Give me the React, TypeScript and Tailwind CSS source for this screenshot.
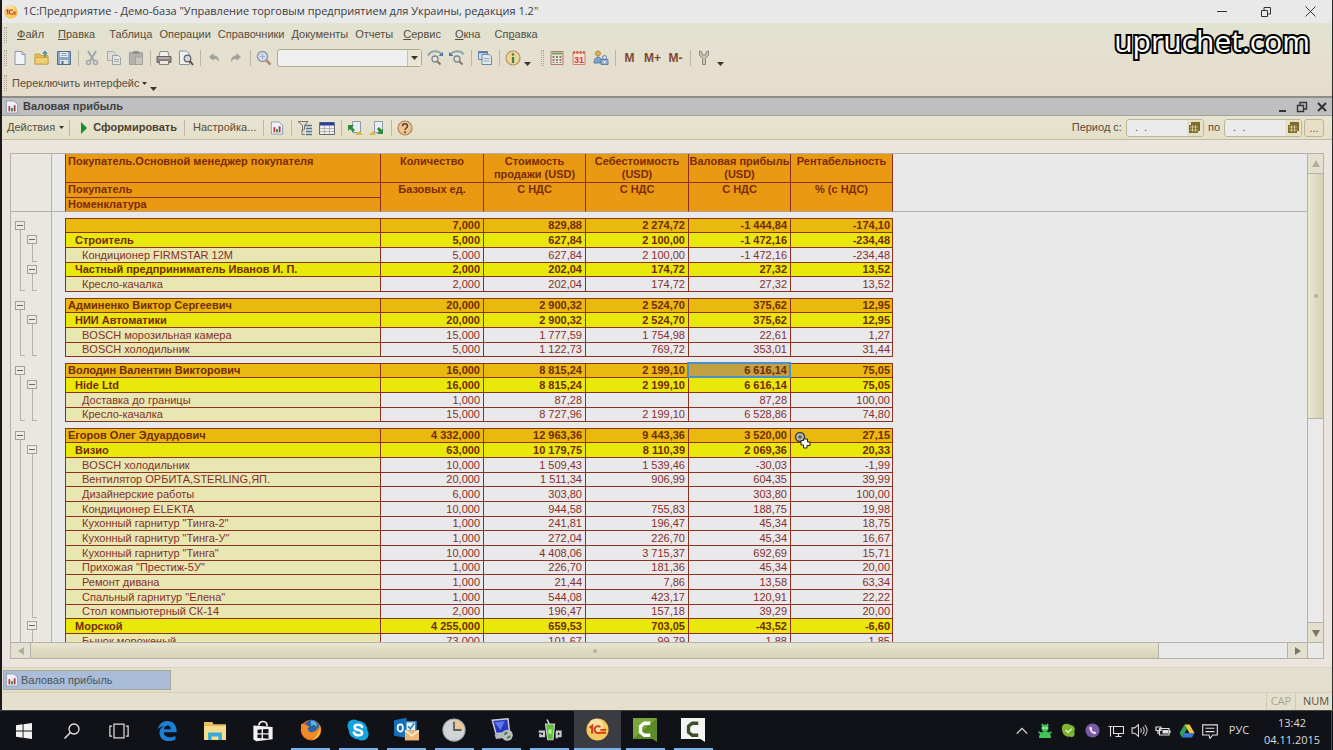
import React from "react";

type Level = "group" | "sub" | "item";
type Outline = "box" | "line" | "foot" | "none";

interface Row {
  level: Level;
  name: string;
  values: string[];
  outline: [Outline, Outline];
  selected?: number;
}

const g = (name: string, values: string[], selected?: number): Row => ({
  level: "group", name, values, outline: ["box", "none"], selected,
});
const s = (name: string, values: string[]): Row => ({ level: "sub", name, values, outline: ["line", "box"] });
const i = (name: string, values: string[], l2: Outline = "line", l1: Outline = "line"): Row => ({
  level: "item", name, values, outline: [l1, l2],
});

const groups: Row[][] = [
  [
    g("", ["7,000", "829,88", "2 274,72", "-1 444,84", "-174,10"]),
    s("Строитель", ["5,000", "627,84", "2 100,00", "-1 472,16", "-234,48"]),
    i("Кондиционер FIRMSTAR 12M", ["5,000", "627,84", "2 100,00", "-1 472,16", "-234,48"], "foot"),
    s("Частный предприниматель Иванов И. П.", ["2,000", "202,04", "174,72", "27,32", "13,52"]),
    i("Кресло-качалка", ["2,000", "202,04", "174,72", "27,32", "13,52"], "foot", "foot"),
  ],
  [
    g("Админенко Виктор Сергеевич", ["20,000", "2 900,32", "2 524,70", "375,62", "12,95"]),
    s("НИИ Автоматики", ["20,000", "2 900,32", "2 524,70", "375,62", "12,95"]),
    i("BOSCH морозильная камера", ["15,000", "1 777,59", "1 754,98", "22,61", "1,27"]),
    i("BOSCH холодильник", ["5,000", "1 122,73", "769,72", "353,01", "31,44"], "foot", "foot"),
  ],
  [
    g("Володин Валентин Викторович", ["16,000", "8 815,24", "2 199,10", "6 616,14", "75,05"], 3),
    s("Hide Ltd", ["16,000", "8 815,24", "2 199,10", "6 616,14", "75,05"]),
    i("Доставка до границы", ["1,000", "87,28", "", "87,28", "100,00"]),
    i("Кресло-качалка", ["15,000", "8 727,96", "2 199,10", "6 528,86", "74,80"], "foot", "foot"),
  ],
  [
    g("Егоров Олег Эдуардович", ["4 332,000", "12 963,36", "9 443,36", "3 520,00", "27,15"]),
    s("Визио", ["63,000", "10 179,75", "8 110,39", "2 069,36", "20,33"]),
    i("BOSCH холодильник", ["10,000", "1 509,43", "1 539,46", "-30,03", "-1,99"]),
    i("Вентилятор ОРБИТА,STERLING,ЯП.", ["20,000", "1 511,34", "906,99", "604,35", "39,99"]),
    i("Дизайнерские работы", ["6,000", "303,80", "", "303,80", "100,00"]),
    i("Кондиционер ELEKTA", ["10,000", "944,58", "755,83", "188,75", "19,98"]),
    i('Кухонный гарнитур "Тинга-2"', ["1,000", "241,81", "196,47", "45,34", "18,75"]),
    i('Кухонный гарнитур "Тинга-У"', ["1,000", "272,04", "226,70", "45,34", "16,67"]),
    i('Кухонный гарнитур "Тинга"', ["10,000", "4 408,06", "3 715,37", "692,69", "15,71"]),
    i('Прихожая "Престиж-5У"', ["1,000", "226,70", "181,36", "45,34", "20,00"]),
    i("Ремонт дивана", ["1,000", "21,44", "7,86", "13,58", "63,34"]),
    i('Спальный гарнитур "Елена"', ["1,000", "544,08", "423,17", "120,91", "22,22"]),
    i("Стол компьютерный СК-14", ["2,000", "196,47", "157,18", "39,29", "20,00"], "foot"),
    s("Морской", ["4 255,000", "659,53", "703,05", "-43,52", "-6,60"]),
    i("Бычок мороженый", ["73,000", "101,67", "99,79", "1,88", "1,85"]),
  ],
];

const levelName: Record<Level, string> = {
  group: "bg-[#e9b90f] font-bold pl-[2px]",
  sub: "bg-[#e9e80b] font-bold pl-[9px]",
  item: "bg-[#e8e7b2] pl-[16px]",
};
const levelValue: Record<Level, string> = {
  group: "bg-[#e9b90f] font-bold",
  sub: "bg-[#e9e80b] font-bold",
  item: "bg-[#e9e8ea]",
};
const levelText: Record<Level, string> = {
  group: "text-[#742a06]",
  sub: "text-[#742a06]",
  item: "text-[#85302a]",
};

function Mark({ kind }: { kind: Outline }) {
  if (kind === "box")
    return (
      <button type="button" aria-label="Свернуть" className="flex h-full w-3 flex-col items-center">
        <span className="mt-[3px] flex h-[9px] w-[10px] shrink-0 items-center justify-center border border-[#a3a09a] bg-[#edeae6]">
          <span className="h-px w-[6px] bg-[#6b6862]" />
        </span>
        <span className="w-px flex-1 bg-[#b5b2ac]" />
      </button>
    );
  if (kind === "none") return <span className="w-3" />;
  return (
    <span className="flex h-full w-3 pl-[6px]">
      <span className={kind === "foot" ? "h-full w-[5px] border-b border-l border-[#b5b2ac]" : "h-full border-l border-[#b5b2ac]"} />
    </span>
  );
}

const B = "border-[#8c3020]";

function ReportTable() {
  const head = `border-l ${B} text-center`;
  return (
    <table className="w-full table-fixed border-separate border-spacing-0 text-[11px] leading-[13px]">
      <colgroup>
        <col className="w-[41px]" />
        <col className="w-[13px]" />
        <col className="w-[315px]" />
        <col className="w-[103px]" />
        <col className="w-[102px]" />
        <col className="w-[103px]" />
        <col className="w-[102px]" />
        <col className="w-[103px]" />
        <col />
      </colgroup>
      <thead className="text-[#7a2a08]">
        <tr className="h-[28px] align-top">
          <td rowSpan={3} className="border-r border-b border-[#b3b1ac] bg-[#eae6e0]" />
          <td rowSpan={3} className="border-b border-[#b3b1ac]" />
          <th className={`border-l ${B} bg-[#ea9a12] p-0 pt-px pl-[2px] text-left`}>Покупатель.Основной менеджер покупателя</th>
          <th className={`${head} bg-[#ea9a12] p-0 pt-px`}>Количество</th>
          <th className={`${head} bg-[#ea9a12] p-0 pt-px`}>Стоимость<br />продажи (USD)</th>
          <th className={`${head} bg-[#ea9a12] p-0 pt-px`}>Себестоимость<br />(USD)</th>
          <th className={`${head} bg-[#ea9a12] p-0 pt-px whitespace-nowrap`}>Валовая прибыль<br />(USD)</th>
          <th className={`border-r ${head} bg-[#ea9a12] p-0 pt-px`}>Рентабельность</th>
          <td rowSpan={3} className="border-b border-[#b3b1ac]" />
        </tr>
        <tr className="h-[15px] align-top">
          <th className={`border-t border-l ${B} bg-[#ea9a12] p-0 pl-[2px] text-left`}>Покупатель</th>
          {["Базовых ед.", "С НДС", "С НДС", "С НДС"].map((t, n) => (
            <th key={n} rowSpan={2} className={`border-t ${head} border-b border-b-[#b3a08c] bg-[#ea9a12] p-0`}>{t}</th>
          ))}
          <th rowSpan={2} className={`border-t border-r ${head} border-b border-b-[#b3a08c] bg-[#ea9a12] p-0`}>% (с НДС)</th>
        </tr>
        <tr className="h-[15px] align-top">
          <th className={`border-t border-l ${B} border-b border-b-[#b3a08c] bg-[#ea9a12] p-0 pl-[2px] text-left`}>Номенклатура</th>
        </tr>
      </thead>
      <tbody>
        <tr className="h-[6px]">
          <td className="border-r border-[#b3b1ac] bg-[#eae6e0] p-0" />
          <td colSpan={8} className="p-0" />
        </tr>
      </tbody>
      {groups.map((rows, n) => (
        <tbody key={n}>
          {rows.map((r, k) => (
            <tr key={k} className={`h-[15px] nth-[3n+1]:h-[14px] ${levelText[r.level]}`}>
              <td className="h-[inherit] border-r border-[#b3b1ac] bg-[#eae6e0] p-0">
                <div className="flex h-full pl-[3px]">
                  <Mark kind={r.outline[0]} />
                  <Mark kind={r.outline[1]} />
                </div>
              </td>
              <td className="p-0" />
              <td className={`overflow-hidden border-t border-l ${B} p-0 whitespace-nowrap ${levelName[r.level]}`}>{r.name}</td>
              {r.values.map((v, c) => (
                <td
                  key={c}
                  className={`border-t border-l ${B} p-0 pr-[3px] text-right whitespace-nowrap nth-8:border-r nth-8:pr-[2px] ${
                    r.selected === c ? "bg-[#c3a142] font-bold outline-2 -outline-offset-1 outline-[#4a90cb]" : levelValue[r.level]
                  }`}
                >
                  {v}
                </td>
              ))}
            </tr>
          ))}
          <tr className="h-[7px]">
            <td className="border-r border-[#b3b1ac] bg-[#eae6e0] p-0" />
            <td className="p-0" />
            <td colSpan={6} className={`border-t ${B} p-0`} />
          </tr>
        </tbody>
      ))}
    </table>
  );
}

function Svg({ children, size = 16 }: { children: React.ReactNode; size?: number }) {
  return (
    <svg width={size} height={size} viewBox="0 0 16 16" fill="none" aria-hidden="true">
      {children}
    </svg>
  );
}

const DocIcon = () => (
  <Svg>
    <path d="M3 1.5h7l3 3v10H3z" fill="#f1f3f6" stroke="#8b98ad" />
    <path d="M10 1.5v3h3" stroke="#8b98ad" />
  </Svg>
);
const ReportIcon = () => (
  <Svg size={14}>
    <path d="M1.5 1h9l4 4v10h-13z" fill="#eef0f5" stroke="#8492ad" />
    <path d="M5 13V7" stroke="#c0392b" strokeWidth="2" />
    <path d="M8 13V9" stroke="#3f7f4a" strokeWidth="2" />
    <path d="M11 13V6" stroke="#9c3a4d" strokeWidth="2" />
  </Svg>
);
const OpenIcon = () => (
  <Svg>
    <path d="M1 4h5l1 1.500h7V14H1z" fill="#e8bd52" stroke="#c09a3e" strokeWidth=".8" />
    <path d="M1 14V7.500h13V14z" fill="#f0cf72" stroke="#c09a3e" strokeWidth=".8" />
    <path d="M11 7V2M9 4l2-2.500L13 4" stroke="#4d87a5" strokeWidth="1.400" />
  </Svg>
);
const SaveIcon = () => (
  <Svg>
    <path d="M1.500 1.500h13v13h-13z" fill="#8ea5c4" stroke="#54708f" />
    <path d="M4 2h8v5H4z" fill="#e8eef2" />
    <path d="M5 3.500h6M5 5.500h6" stroke="#7b94a5" strokeWidth=".8" />
    <path d="M4 10h8v4H4z" fill="#dce4ea" />
    <path d="M5.500 11h2v3h-2z" fill="#54708f" />
  </Svg>
);
const CutIcon = () => (
  <Svg>
    <path d="M4 1l6 10M12 1L6 11" stroke="#9fa8ad" strokeWidth="2" />
    <circle cx="4.500" cy="12.500" r="2" stroke="#9fa8ad" strokeWidth="1.500" />
    <circle cx="11.500" cy="12.500" r="2" stroke="#9fa8ad" strokeWidth="1.500" />
  </Svg>
);
const CopyIcon = () => (
  <Svg>
    <path d="M1.500 1.500h6l2 2v7h-8z" fill="#dcdcd8" stroke="#a5aaae" />
    <path d="M6.500 5.500h6l2 2v7h-8z" fill="#e2e2de" stroke="#9aa1a7" />
    <path d="M8 9.500h5M8 11.500h5" stroke="#a5aaae" />
  </Svg>
);
const PasteIcon = () => (
  <Svg>
    <path d="M1.500 2.500h13v12h-13z" fill="#b4b2aa" stroke="#a19f98" />
    <path d="M5 1h6v3H5z" fill="#95938d" />
    <path d="M7.500 7h7v7.500h-7z" fill="#c4c3bc" stroke="#a3a29b" />
  </Svg>
);
const PrintIcon = () => (
  <Svg>
    <path d="M4 1.500h8l1 5H3z" fill="#f0f0f0" stroke="#777" strokeWidth=".8" />
    <path d="M1 6.500h14v6H1z" fill="#8d8a8c" stroke="#66635f" />
    <path d="M2.500 8h11" stroke="#d5d0c4" />
    <path d="M3.500 10.500h9v4h-9z" fill="#ece9e0" stroke="#6a6764" strokeWidth=".8" />
    <path d="M12 9h2" stroke="#c88a49" />
  </Svg>
);
const PreviewIcon = () => (
  <Svg>
    <path d="M1.500 1h7l3 3v10.500h-10z" fill="#eff0f2" stroke="#8793a3" />
    <circle cx="9.500" cy="8.500" r="3.300" fill="#cfd9df" stroke="#5d6268" strokeWidth="1.200" />
    <path d="M12 11l3 4" stroke="#6a4d3e" strokeWidth="2" />
  </Svg>
);
const UndoIcon = () => (
  <Svg>
    <path d="M3 7l4.500-4v2.500c4 0 5.500 2.500 5.500 6.500-1.500-2.500-3-3-5.500-3V11z" fill="#a3a39d" />
  </Svg>
);
const RedoIcon = () => (
  <Svg>
    <path d="M13 7L8.500 3v2.500C4.500 5.500 3 8 3 12c1.500-2.500 3-3 5.500-3v2z" fill="#a3a39d" />
  </Svg>
);
const SearchIcon = () => (
  <Svg>
    <path d="M10 10l4.500 4.500" stroke="#b08d62" strokeWidth="2.500" />
    <circle cx="6.500" cy="6.500" r="5" fill="#d6dde8" stroke="#9199ae" strokeWidth="1.500" />
    <path d="M4 6.500h5M6.500 4v5" stroke="#9db0cb" />
  </Svg>
);
const FindIcon = ({ back = false }: { back?: boolean }) => (
  <Svg>
    <path d="M1 5.500C4 0 12 0 14.500 4.500" stroke="#8ba2ad" strokeWidth="1.800" />
    <path d={back ? "M0 2v4h4.500z" : "M16 2v4h-4.500z"} fill="#4d7a9b" />
    <circle cx="8" cy="9" r="3" fill="#e1e4e2" stroke="#7e878c" strokeWidth="1.300" />
    <path d="M10.500 11.500l3 3" stroke="#8c6f5a" strokeWidth="1.800" />
  </Svg>
);
const WindowsIcon = () => (
  <Svg>
    <path d="M1.500 1.500h9v8h-9z" fill="#d5dde8" stroke="#6a87aa" />
    <path d="M1.500 2.500h9" stroke="#5478a5" strokeWidth="1.500" />
    <path d="M5 4.500h7l2.500 2.500v7.500H5z" fill="#e4e9ee" stroke="#6a87aa" />
    <path d="M6.500 8.500h6M6.500 11h6" stroke="#8ea6c2" />
  </Svg>
);
const InfoIcon = () => (
  <Svg>
    <circle cx="8" cy="8" r="7" fill="#ecd49c" stroke="#b3945c" strokeWidth="1.200" />
    <circle cx="8" cy="4.500" r="1.300" fill="#3c8242" />
    <path d="M8 7v6" stroke="#3c8242" strokeWidth="2.200" />
  </Svg>
);
const CalcIcon = () => (
  <Svg>
    <path d="M2 1.500h12v13H2z" fill="#f3e2cd" stroke="#b07a66" />
    <path d="M3 3.500h10" stroke="#67a275" strokeWidth="2" />
    <path d="M4.500 6v7M8 6v7M11.500 6v7" stroke="#7c8379" strokeWidth="2" strokeDasharray="2 1" />
  </Svg>
);
const CalendarIcon = () => (
  <Svg>
    <path d="M2 2.500h12v12H2z" fill="#f7e3d5" stroke="#c98571" />
    <path d="M2 2.500h12" stroke="#d66a53" strokeWidth="3" strokeDasharray="2 1.300" />
    <text x="8" y="13" textAnchor="middle" fontSize="9" fontWeight="bold" fill="#d8402a" fontFamily="Liberation Sans, sans-serif">31</text>
  </Svg>
);
const UsersIcon = () => (
  <Svg>
    <circle cx="5" cy="3.500" r="2.500" fill="#e4b04f" stroke="#a98038" strokeWidth=".8" />
    <path d="M1 13c0-8 8-8 8 0z" fill="#7fa3cb" stroke="#4b7097" strokeWidth=".8" />
    <circle cx="11.500" cy="7.500" r="2" fill="#d9dfe7" stroke="#4b7097" strokeWidth=".9" />
    <path d="M8 14.500h7v-5H8z" fill="#9cb7d7" stroke="#4b7097" strokeWidth=".8" />
    <path d="M11.500 11v2" stroke="#fff" strokeWidth="1.200" />
  </Svg>
);
const WrenchIcon = () => (
  <Svg>
    <path d="M3.500 1v4.500L6.500 8v6.500h3V8l3-2.500V1L10 2v3H6V2z" fill="#cbc7bd" stroke="#8b8880" />
  </Svg>
);
const FilterIcon = () => (
  <Svg>
    <path d="M1 1.500h10L7.500 5.500v4l-2 1v-5z" fill="#e3ddcd" stroke="#77736c" />
    <path d="M8 5.500h7M9 8.500h6M9 11.500h6M9 14.500h6" stroke="#4b78a0" strokeWidth="1.500" />
    <path d="M5 10v4.500h3" stroke="#777" />
  </Svg>
);
const GridIcon = () => (
  <Svg>
    <path d="M.5 2.500h15v12H.5z" fill="#f0eee9" stroke="#656a78" />
    <path d="M1 4h14" stroke="#27409a" strokeWidth="3" />
    <path d="M1 8.500h14M1 11.500h14M5.500 6v8M10.500 6v8" stroke="#a5a5a5" strokeWidth=".8" />
  </Svg>
);
const SheetArrowIcon = ({ down = false }: { down?: boolean }) => (
  <Svg>
    <path d="M5.500 1.500h8v11h-8z" fill="#e9edf0" stroke="#8d9aa9" />
    <path d={down ? "M14 14H8l2-2-2-3 2-2 3 3 1-2z" : "M1 5h6L5 7l3 3-2 2-3-3-2 2z"} fill="#2f8a3c" />
    <path d={down ? "M0 15l4-4 3 4z" : "M8 15l4-4 4 4z"} fill="#dfb83d" />
  </Svg>
);
const HelpIcon = () => (
  <Svg>
    <circle cx="8" cy="8" r="7" fill="#efc48f" stroke="#ad845b" strokeWidth="1.200" />
    <path d="M5.500 6.200C5.500 3 10.500 3 10.500 6.200 10.500 8 8 8 8 10" stroke="#5b4236" strokeWidth="1.500" />
    <circle cx="8" cy="12.200" r="1" fill="#5b4236" />
  </Svg>
);
const OneC = ({ size = 16 }: { size?: number }) => (
  <Svg size={size}>
    <circle cx="8" cy="8" r="7.700" fill="#f4c95c" />
    <circle cx="7" cy="5.500" r="5" fill="#f8e0a0" />
    <path d="M2.500 6.800L4.300 5.500v5.200" stroke="#d23a1c" strokeWidth="1.500" />
    <path d="M10 6.300C8.500 5 6 5.800 6 8s2 2.700 3.500 2.300H14M10 8.300H14" stroke="#d23a1c" strokeWidth="1.300" />
  </Svg>
);
const Tri = ({ className = "" }: { className?: string }) => (
  <svg width="7" height="4" viewBox="0 0 7 4" className={className} aria-hidden="true">
    <path d="M0 0h7L3.500 4z" fill="#3b342a" />
  </svg>
);

const Sep = () => <span className="flex w-[6px] justify-center"><span className="h-4 w-px bg-[#bdb6a4]" /></span>;
const Grip = () => <span className="h-4 w-[3px] border-x border-dotted border-[#aaa494]" />;
const Tool = ({ label, children }: { label: string; children: React.ReactNode }) => (
  <button type="button" aria-label={label} className="flex h-5 w-[22px] shrink-0 items-center justify-center">
    {children}
  </button>
);

function MainToolbar() {
  return (
    <div className="flex h-6 items-center pl-[2px]">
      <Grip />
      <span className="w-[2px]" />
      <Tool label="Новый"><DocIcon /></Tool>
      <Tool label="Открыть"><OpenIcon /></Tool>
      <Tool label="Сохранить"><SaveIcon /></Tool>
      <Sep />
      <Tool label="Вырезать"><CutIcon /></Tool>
      <Tool label="Копировать"><CopyIcon /></Tool>
      <Tool label="Вставить"><PasteIcon /></Tool>
      <Sep />
      <Tool label="Печать"><PrintIcon /></Tool>
      <Tool label="Просмотр"><PreviewIcon /></Tool>
      <Sep />
      <Tool label="Отменить"><UndoIcon /></Tool>
      <Tool label="Повторить"><RedoIcon /></Tool>
      <Sep />
      <Tool label="Найти"><SearchIcon /></Tool>
      <span className="mx-[2px] flex h-[18px] w-[145px] rounded-[3px] border border-[#b3aa8e] bg-[#f0eff0]">
        <input aria-label="Строка поиска" className="min-w-0 flex-1 bg-transparent px-1 outline-none" />
        <button type="button" aria-label="История поиска" className="flex w-[14px] items-center justify-center border-l border-[#c9c2a8] bg-[#ebe6d3]">
          <Tri />
        </button>
      </span>
      <Tool label="Найти следующий"><FindIcon /></Tool>
      <Tool label="Найти предыдущий"><FindIcon back /></Tool>
      <Sep />
      <Tool label="Окна"><WindowsIcon /></Tool>
      <Sep />
      <Tool label="Справка"><InfoIcon /></Tool>
      <Tri className="mt-[11px]" />
      <span className="w-[10px]" />
      <Grip />
      <span className="w-[2px]" />
      <Tool label="Калькулятор"><CalcIcon /></Tool>
      <Tool label="Календарь"><CalendarIcon /></Tool>
      <Tool label="Пользователи"><UsersIcon /></Tool>
      <Sep />
      {["M", "M+", "M-"].map((m) => (
        <button key={m} type="button" className="w-[23px] text-center text-[12px] font-bold text-[#7d4a35]">{m}</button>
      ))}
      <Sep />
      <Tool label="Настройки"><WrenchIcon /></Tool>
      <Tri className="mt-[11px] ml-[2px]" />
    </div>
  );
}

const menu: [string, string, string][] = [
  ["", "Ф", "айл"],
  ["", "П", "равка"],
  ["Таблица", "", ""],
  ["Операции", "", ""],
  ["Справочники", "", ""],
  ["Документы", "", ""],
  ["Отчеты", "", ""],
  ["", "С", "ервис"],
  ["", "О", "кна"],
  ["Сп", "р", "авка"],
];

function RestoreGlyph({ bold = false }: { bold?: boolean }) {
  return (
    <svg width="12" height="12" viewBox="0 0 12 12" fill="none" stroke="#333" strokeWidth={bold ? 1.4 : 1} aria-hidden="true">
      <path d="M1.500 4.500h6v6h-6zM4 4V1.500h6.500V8H8" />
    </svg>
  );
}

function DateField({ label }: { label: string }) {
  return (
    <>
      <label htmlFor={label}>{label}</label>
      <span className="flex h-[18px] w-[78px] rounded-[3px] border border-[#bdb597] bg-[#ecebeb]">
        <input id={label} defaultValue=".  ." className="min-w-0 flex-1 bg-transparent pl-2 text-[11px] outline-none" />
        <button type="button" aria-label="Выбрать дату" className="flex w-4 items-center justify-center bg-[#e6e0c6]">
          <svg width="11" height="11" viewBox="0 0 11 11" aria-hidden="true">
            <path d="M2 0h9v9H9v2H0V3h2z" fill="#7d6c2c" />
            <path d="M1 5h8M1 8h8M3.500 3v7M6.500 3v7" stroke="#d8cf9e" strokeWidth=".8" />
          </svg>
        </button>
      </span>
    </>
  );
}

const appIcons: { label: string; state: "idle" | "open" | "active"; icon: React.ReactNode }[] = [
  { label: "Пуск", state: "idle", icon: <Svg><path d="M0 2.300L6.600 1.300v6.200H0zM7.500 1.200L16 0v7.500H7.500zM0 8.500h6.600v6.200L0 13.700zM7.500 8.500H16V16l-8.500-1.200z" fill="#f2f2f2" /></Svg> },
  { label: "Поиск", state: "idle", icon: <Svg><circle cx="10" cy="6" r="5" stroke="#e6e6e6" strokeWidth="1.300" /><path d="M6.500 9.500L.5 15.500" stroke="#e6e6e6" strokeWidth="1.400" /></Svg> },
  { label: "Представление задач", state: "idle", icon: <Svg size={20}><path d="M4 2.500h8v11H4zM2.500 4H.7v8h1.800M13.500 4h1.800v8h-1.800" stroke="#dcdcdc" /></Svg> },
  { label: "Edge", state: "idle", icon: <Svg size={20}><path d="M.5 7C1.500 2 5 0 8.500 0 13 0 16 3.500 15.700 9H5.500c0 4.500 5.500 5 9.200 2.700v3C9 17.500 2 15.500 2 9.500 2 6.500 4 4.500 6 3.800 4 4 1.800 5 .5 7zM5.500 6.500H11C11 2.500 6 2.800 5.500 6.500z" fill="#1c7fd6" /></Svg> },
  { label: "Проводник", state: "idle", icon: <Svg size={22}><path d="M0 1.500h6l1 1.500h9v11.500H0z" fill="#e6bd5e" /><path d="M0 4.500h16v10H0z" fill="#f6dc8e" /><path d="M3 14.500V9h10v5.500h-2.500V12h-5v2.500z" fill="#36a9d8" /></Svg> },
  { label: "Магазин", state: "idle", icon: <Svg size={22}><path d="M1 4l14 1v9L3 15.500 1 14z" fill="#f2f2f2" /><path d="M5 4C5 0 11 0 11 4.500" stroke="#f2f2f2" strokeWidth="1.200" /><path d="M4 7l3-.2v2.900H4zM8 6.800l4-.3v3.200H8zM4 10.500h3v2.700l-3-.2zM8 10.500h4v3.200l-4-.4z" fill="#111318" /></Svg> },
  { label: "Firefox", state: "open", icon: <Svg size={22}><circle cx="8" cy="8" r="7.500" fill="#e8681b" /><circle cx="8.500" cy="6" r="5.400" fill="#2863a8" /><path d="M8 1c4 0 5 3 4 5-1-2-2-2-4-1z" fill="#57b4dc" /><path d="M.8 4C3 2 4 5 7 5.500 4.500 7 6 10 9 9.500c2 0 3.500-1.500 4.500-4 1 4-1 8.500-5.500 9C3 15 0 10 .8 4z" fill="#f08a24" /><path d="M14.500 4.500c1.500 5-1 10.500-6.500 11 3.500-2 6-5 6.500-11z" fill="#f7c63c" /></Svg> },
  { label: "Skype", state: "open", icon: <Svg size={22}><circle cx="5" cy="5" r="4.700" fill="#15a3dd" /><circle cx="11" cy="11" r="4.700" fill="#15a3dd" /><circle cx="8" cy="8" r="6.800" fill="#15a3dd" /><path d="M11 5.800C10 3.500 5.500 3.800 5.500 6c0 2.800 5.500 1.200 5.500 4 0 2.400-5 2.600-6-.2" stroke="#fff" strokeWidth="1.900" strokeLinecap="round" /></Svg> },
  { label: "Outlook", state: "open", icon: <Svg size={25}><path d="M7 3h7v6H7z" fill="#e7eff7" stroke="#2b83cb" /><path d="M9 6l1.500 1.500L13 4" stroke="#2b83cb" /><path d="M0 2l8-1.500v13L0 12z" fill="#1570bb" /><ellipse cx="4" cy="7" rx="1.700" ry="2.300" stroke="#fff" strokeWidth="1.100" /><path d="M7 8.500h9V15H7z" fill="#eeb878" /><path d="M7 8.500l4.500 3.500L16 8.500" stroke="#fff0d8" /></Svg> },
  { label: "Часы", state: "open", icon: <Svg size={24}><circle cx="8" cy="8" r="7.400" fill="#d1d3d4" stroke="#a6a8aa" strokeWidth=".7" /><path d="M8 8V1.500A6.500 6.500 0 0 1 14.500 8z" fill="#e9c98c" /><path d="M8 2.500V8h5" stroke="#59606c" strokeWidth="1.200" /></Svg> },
  { label: "Удалённый рабочий стол", state: "open", icon: <Svg size={24}><path d="M1.500 1.500L12 .5l1 9-9 1z" fill="#2739bd" stroke="#c8ccd8" /><path d="M3 3l7-1-3 6z" fill="#6276e5" /><path d="M3 11l8-1 1 3-8 1z" fill="#b4b8be" /><circle cx="11.500" cy="11.500" r="3.700" fill="#b9beba" /><path d="M9.500 11l2-1.500M11.500 13.500l2-1.500" stroke="#397647" strokeWidth="1.200" /></Svg> },
  { label: "Утилита", state: "open", icon: <Svg size={24}><path d="M5 4h6l-1 10.500H6.500z" fill="#5fbf3a" stroke="#c9cfd0" strokeWidth=".8" /><path d="M6 1l1.500 3" stroke="#d9d9d9" /><path d="M.5 9h3.500v3H1.500v-1.500M12 9h3v3h-2.500V9v4.500" stroke="#c9cccf" strokeWidth="1.500" /><path d="M7 9h2" stroke="#b4f08c" strokeWidth="3" /></Svg> },
  { label: "1С:Предприятие", state: "active", icon: <OneC size={23} /> },
  { label: "Camtasia Studio", state: "open", icon: <Svg size={24}><path d="M0 0h16v16l-3-2H0z" fill="#5b8a27" /><path d="M0 0h16L0 14z" fill="#78a63b" /><path d="M11.500 3.500H7.500L5 5.500v4L7.500 11.500h4" stroke="#fff" strokeWidth="2.200" /></Svg> },
  { label: "Camtasia Recorder", state: "open", icon: <Svg size={24}><path d="M0 0h16v16l-3-2H0z" fill="#f3f5f1" /><path d="M11.500 3.500H7.500L5 5.500v4L7.500 11.500h4" stroke="#3c4f2a" strokeWidth="2.200" /></Svg> },
];

const tray: { label: string; icon: React.ReactNode }[] = [
  { label: "Показать скрытые значки", icon: <Svg size={14}><path d="M2 11l6-6 6 6" stroke="#dedede" strokeWidth="1.500" /></Svg> },
  { label: "Агент", icon: <Svg><circle cx="8" cy="5" r="3.500" fill="#3fc65b" /><path d="M2 15c0-9 12-9 12 0z" fill="#3fc65b" /><path d="M5 1l1.500 3M11 1L9.500 4M1.500 9L5 11M14.500 9L11 11" stroke="#3fc65b" strokeWidth="1.800" /><circle cx="6.500" cy="5" r="1" fill="#d5f5da" /><circle cx="9.500" cy="5" r="1" fill="#d5f5da" /></Svg> },
  { label: "Skype для бизнеса", icon: <Svg size={15}><path d="M1 5C1 0 7 0 10 2c4 0 6 4 4 7 2 5-2 7-5 5.500C4 15 1 11 1 5z" fill="#7fb52e" /><path d="M5 7.500l2.500 2.500L11.500 6" stroke="#e6f3cd" strokeWidth="1.500" /></Svg> },
  { label: "Viber", icon: <Svg size={15}><circle cx="8" cy="8" r="7.500" fill="#7a5aa6" /><path d="M4.500 4.500c0 4 3 7 6.500 7.500l1-2-2-1.200-1 .8L7 7.300l.8-1-1-2.300z" fill="#eee7f6" /></Svg> },
  { label: "Сеть", icon: <Svg><path d="M5.500 3.500h10v7h-10zM10.500 10.500v3M7.500 13.500h6M.5 3.500h4M2.500 3.500v10" stroke="#e0e0e0" strokeWidth="1.100" /></Svg> },
  { label: "Громкость", icon: <Svg size={17}><path d="M1 5.500h2.500L7 2.500v11l-3.500-3H1z" stroke="#e0e0e0" /><path d="M9 6c1 1.500 1 2.500 0 4M11 4.500c2 2.500 2 4.500 0 7M13 3c3 3.500 3 6.500 0 10" stroke="#c6c6c6" /></Svg> },
  { label: "Батарея", icon: <Svg><path d="M4.500 5.500h9.500v6.500H4.500zM15 7.500v2.500" stroke="#e0e0e0" strokeWidth="1.200" /><path d="M7.500 7H13v3.500H7.500z" fill="#e0e0e0" /><path d="M1 4h5v3.500H1zM3 7v4" stroke="#e0e0e0" strokeWidth="1.200" /></Svg> },
  { label: "Google Диск", icon: <Svg><path d="M5.500 1.500h5l5 8.500h-5z" fill="#f3c73a" /><path d="M5.500 1.500L8 6 3 14.500.5 10z" fill="#2da05a" /><path d="M5.500 10h10L13 14.500H3z" fill="#3c77d8" /></Svg> },
  { label: "Уведомления", icon: <Svg size={18}><path d="M1.500 2.500h13v9h-4l-2.500 3-1-3H1.500z" stroke="#e0e0e0" /><path d="M4 5.500h8M4 8.500h8" stroke="#e0e0e0" /></Svg> },
];

function Taskbar() {
  return (
    <footer className="flex h-10 shrink-0 items-stretch justify-between border-t border-[#45453f] bg-[#101217] text-[#dcdcdc]">
      <nav className="grid w-[717px] grid-cols-[repeat(15,minmax(0,1fr))]">
        {appIcons.map((a) => (
          <button
            key={a.label}
            type="button"
            aria-label={a.label}
            className={`flex flex-col items-center ${a.state === "active" ? "bg-[#3b3c42]" : ""}`}
          >
            <span className="flex flex-1 items-center">{a.icon}</span>
            {a.state !== "idle" && <span className={`h-[2px] bg-[#7ab2ec] ${a.state === "active" ? "w-full" : "w-[39px]"}`} />}
          </button>
        ))}
      </nav>
      <div className="flex items-center font-['Open_Sans','Noto_Sans',sans-serif] text-[11px]">
        <div className="grid w-[212px] grid-cols-[repeat(9,minmax(0,1fr))]">
          {tray.map((t) => (
            <button key={t.label} type="button" aria-label={t.label} className="flex items-center justify-center">{t.icon}</button>
          ))}
        </div>
        <button type="button" className="w-[34px] text-center">РУС</button>
        <div className="w-[71px] pl-px text-center leading-[17px]">
          <div>13:42</div>
          <div>04.11.2015</div>
        </div>
        <span className="ml-1 h-full w-[2px] border-l border-[#4a4c50]" />
      </div>
    </footer>
  );
}

const Arrow = ({ d, color }: { d: string; color: string }) => (
  <svg width="8" height="8" viewBox="0 0 8 8" aria-hidden="true"><path d={d} fill={color} /></svg>
);

export default function App() {
  return (
    <div className="relative flex h-screen w-full flex-col overflow-hidden bg-[#101217] font-['Liberation_Sans',Arial,sans-serif] text-[11px] text-[#574d3b]">
      <div className="flex min-h-0 flex-1 flex-col border-r border-l-2 border-r-[#2b2b2b] border-l-[#1c1a1c] bg-[#ebe5de]">
        <header className="flex h-[23px] shrink-0 items-center bg-[#eae9ea] pl-[2px] text-[#3c3c3c]">
          <OneC size={14} />
          <h1 className="flex-1 pl-[5px] font-['Open_Sans','Noto_Sans',sans-serif] text-[11px]">
            1С:Предприятие - Демо-база "Управление торговым предприятием для Украины, редакция 1.2"
          </h1>
          <button type="button" aria-label="Свернуть окно" className="flex w-11 justify-center"><span className="h-px w-[10px] bg-[#333]" /></button>
          <button type="button" aria-label="Восстановить окно" className="flex w-11 justify-center"><RestoreGlyph /></button>
          <button type="button" aria-label="Закрыть окно" className="flex w-11 justify-center">
            <svg width="11" height="11" viewBox="0 0 11 11" stroke="#333" aria-hidden="true"><path d="M.5.5l10 10M10.500.5l-10 10" /></svg>
          </button>
        </header>

        <div className="shrink-0 bg-linear-to-b from-[#e2e3d2] via-[#e5dfcf] to-[#e6dccb]">
          <nav className="flex h-[23px] items-center pl-[2px]">
            <Grip />
            <div className="flex pl-[10px]">
              {menu.map(([a, b, c]) => (
                <a key={a + b + c} href="#" className={b ? "mr-[14px]" : "mr-[7px] nth-7:mr-[10px]"}>
                  {a}{b && <u>{b}</u>}{c}
                </a>
              ))}
            </div>
          </nav>
          <MainToolbar />
          <div className="flex h-[26px] items-center pl-[2px]">
            <Grip />
            <button type="button" className="flex items-center gap-[2px] pl-[5px]">
              Переключить интерфейс <svg width="5" height="3" viewBox="0 0 5 3" aria-hidden="true"><path d="M0 0h5L2.500 3z" fill="#3b342a" /></svg>
            </button>
            <Tri className="mt-3 ml-[3px]" />
          </div>
        </div>

        <div className="flex h-5 shrink-0 items-center border-t-2 border-b border-t-[#8f8d87] border-b-[#a09f99] bg-[#bfbfbf] pl-[3px]">
          <ReportIcon />
          <h2 className="flex-1 pl-1 text-[11px] font-bold text-[#404040]">Валовая прибыль</h2>
          <div className="flex items-center">
            <button type="button" aria-label="Свернуть отчёт" className="flex w-5 justify-center"><span className="mt-2 h-[2px] w-[7px] bg-[#333]" /></button>
            <button type="button" aria-label="Восстановить отчёт" className="flex w-5 justify-center"><RestoreGlyph bold /></button>
            <button type="button" aria-label="Закрыть отчёт" className="flex w-5 justify-center">
              <svg width="10" height="10" viewBox="0 0 10 10" stroke="#333" strokeWidth="2" aria-hidden="true"><path d="M1 1l8 8M9 1L1 9" /></svg>
            </button>
          </div>
        </div>

        <div className="flex h-6 shrink-0 items-center justify-between border-b border-[#c2bba6] bg-linear-to-b from-[#e7e4d2] to-[#e4dfc8]">
          <div className="flex items-center">
            <button type="button" className="flex items-center gap-1 pl-[5px]">
              Действия <svg width="5" height="3" viewBox="0 0 5 3" aria-hidden="true"><path d="M0 0h5L2.500 3z" fill="#3b342a" /></svg>
            </button>
            <span className="w-[2px]" />
            <Sep />
            <button type="button" className="flex items-center gap-[6px] pl-[9px] text-[11px] font-bold text-[#4a4130]">
              <svg width="6" height="12" viewBox="0 0 6 12" aria-hidden="true"><path d="M0 0l6 6-6 6z" fill="#1d8a26" /></svg>
              Сформировать
            </button>
            <span className="w-1" />
            <Sep />
            <button type="button" className="pr-1 pl-[6px]">Настройка...</button>
            <Sep />
            <Tool label="Отчёт"><ReportIcon /></Tool>
            <Sep />
            <Tool label="Отбор"><FilterIcon /></Tool>
            <Tool label="Таблица"><GridIcon /></Tool>
            <Sep />
            <Tool label="Загрузить настройки"><SheetArrowIcon /></Tool>
            <Tool label="Сохранить настройки"><SheetArrowIcon down /></Tool>
            <Sep />
            <Tool label="Помощь"><HelpIcon /></Tool>
          </div>
          <form className="flex items-center gap-1 pr-2">
            <DateField label="Период с:" />
            <DateField label="по" />
            <button type="button" aria-label="Выбрать период" className="-ml-[2px] h-[18px] w-5 rounded-[3px] border border-[#bdb597] bg-[#e6e0c6] leading-3">...</button>
          </form>
        </div>

        <main className="mx-2 mt-[13px] mb-2 flex min-h-0 flex-1 flex-col border border-[#b3b1ac] bg-[#e9e9ea]">
          <div className="flex min-h-0 flex-1">
            <div className="min-w-0 flex-1 overflow-hidden bg-[linear-gradient(to_right,#eae6e0_40px,#b3b1ac_40px,#b3b1ac_41px,#e9e9ea_41px)]">
              <ReportTable />
            </div>
            <div className="flex w-4 flex-col border-l border-[#b3b1ac] bg-[#ebe9ea]">
              <button type="button" aria-label="Вверх" className="flex h-5 items-center justify-center border-b border-[#b3b1ac] bg-[#e4e0cf]">
                <Arrow d="M4 0l4 7H0z" color="#b0ad9e" />
              </button>
              <div className="flex h-[245px] items-center justify-center border-b border-[#b3b1ac] bg-linear-to-r from-[#ebe8d3] to-[#d5d1b4]">
                <span className="size-1 rounded-full bg-[#b5b19a]" />
              </div>
              <div className="flex-1" />
              <button type="button" aria-label="Вниз" className="flex h-5 items-center justify-center border-t border-[#b3b1ac] bg-[#e4e0cf]">
                <Arrow d="M0 1h8L4 8z" color="#77746a" />
              </button>
            </div>
          </div>
          <div className="flex h-4 border-t border-[#b3b1ac]">
            <button type="button" aria-label="Влево" className="flex w-5 items-center justify-center border-r border-[#b3b1ac] bg-[#e4e0cf]">
              <Arrow d="M7 0v8L1 4z" color="#b0ad9e" />
            </button>
            <div className="flex w-[86%] items-center justify-center border-r border-[#b3b1ac] bg-linear-to-b from-[#e8e5d1] to-[#d7d2b6]">
              <span className="size-1 rounded-full bg-[#b5b19a]" />
            </div>
            <div className="flex-1" />
            <button type="button" aria-label="Вправо" className="flex w-5 items-center justify-center border-l border-[#b3b1ac] bg-[#e4e0cf]">
              <Arrow d="M1 0v8l6-4z" color="#77746a" />
            </button>
            <div className="w-4 border-l border-[#b3b1ac]" />
          </div>
        </main>

        <div className="flex h-[25px] shrink-0 items-center border-t border-[#d8d3c0] bg-[#e3dfcc] pl-px">
          <button type="button" className="flex h-5 w-[168px] items-center gap-[2px] border border-[#a8a793] bg-[#a9bdd8] pl-px text-[#4d545c]">
            <ReportIcon />
            Валовая прибыль
          </button>
        </div>
        <div className="flex h-[18px] shrink-0 items-center justify-end border-t border-[#d5d0bb] bg-[#e4e0cd] font-['Open_Sans','Noto_Sans',sans-serif] text-[11px]">
          <span className="flex w-[30px] justify-center border-x border-[#d0cab2] text-[#aaa487]">CAP</span>
          <span className="flex w-9 justify-center pl-1 text-[#57523f]">NUM</span>
        </div>
      </div>

      <Taskbar />

      <div className="absolute top-[23px] right-[23px] font-['Open_Sans','Noto_Sans',sans-serif] text-[30px] leading-9 font-medium text-white [paint-order:stroke_fill] [-webkit-text-stroke:4px_#000]">
        upruchet.com
      </div>
      <svg className="absolute top-[431px] left-[794px]" width="17" height="18" viewBox="0 0 17 18" fill="none" aria-hidden="true">
        <circle cx="6" cy="6" r="4.500" fill="#b8b8a8" stroke="#3c4248" strokeWidth="1.500" />
        <path d="M4 6h4M6 4v4" stroke="#3c4248" />
        <path d="M7 9.500h2.500V8h4v3H16v3.500h-3V17H9.500v-3H7z" fill="#f5f5f5" stroke="#222" />
      </svg>
    </div>
  );
}
